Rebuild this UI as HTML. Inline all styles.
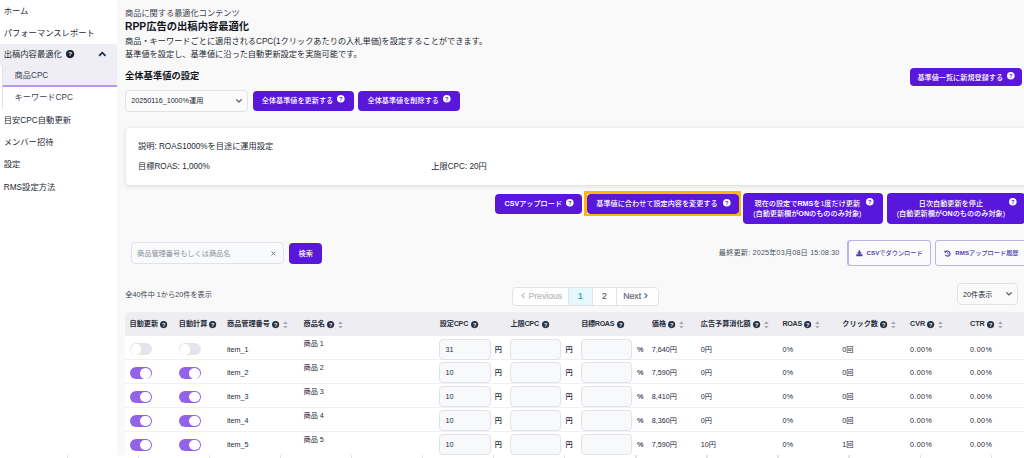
<!DOCTYPE html>
<html lang="ja">
<head>
<meta charset="utf-8">
<title>RPP広告の出稿内容最適化</title>
<style>
*{box-sizing:border-box;margin:0;padding:0}
html,body{width:1024px;height:458px;overflow:hidden;background:#fff}
body{position:relative;font-family:"Liberation Sans","Noto Sans CJK JP",sans-serif;font-size:8.2px;color:#252933;-webkit-text-size-adjust:none}
.abs{position:absolute;white-space:nowrap}
svg{overflow:visible}
.t{position:absolute;white-space:nowrap;line-height:12px;height:12px}
.s{font-size:7.2px;color:#252934}
.b{font-weight:bold}
#side{position:absolute;left:0;top:0;width:117px;height:455px;background:#fff;font-size:8.3px}
#main{position:absolute;left:117px;top:0;width:907px;height:455px;background:#f9f9fa}
.btn{position:absolute;background:#5a17dc;border-radius:4px}
.bt{position:absolute;white-space:nowrap;line-height:12px;height:12px;color:#fff;font-size:7.15px;font-weight:500}.bt b{font-weight:bold}
.inp{position:absolute;background:#f8f9fb;border:1px solid #e1e3e8;border-radius:4px}
.row{position:absolute;left:125px;width:905px;height:23.92px;background:#fff}.ln{position:absolute;left:125px;width:905px;height:2px;background:#f1f1f5}
.tg{position:absolute;width:22px;height:12.2px;border-radius:6.1px}
.tg i{position:absolute;top:.8px;width:10.6px;height:10.6px;border-radius:50%;background:#fff}
.tg.off{background:#e4e5ea}.tg.off i{left:.8px}
.tg.on{background:#9063e9}.tg.on i{right:.8px}
.pg{position:absolute;top:286.6px;height:19.8px;background:#fff;border:1px solid #e3e4e9;border-radius:4px;overflow:hidden}.pg b{position:absolute;top:0;bottom:0;width:1px;background:#e3e4e9}.pt{position:absolute;white-space:nowrap;line-height:12px;height:12px;font-size:8.7px;color:#636874;-webkit-text-stroke:.2px currentColor}
.ob{position:absolute;background:#beb3e8;border-radius:3.4px}.ob i{position:absolute;left:1.5px;top:1.5px;right:1.5px;bottom:1.5px;background:#fbfbfc;border-radius:2.2px}
</style>
</head>
<body>
<div id="side">
  <div class="abs" style="left:0;top:44px;width:117px;height:20.5px;background:#eeeef4"></div>
  <div class="abs" style="left:1.9px;top:64.5px;width:0.7px;height:44.5px;background:#e2e2e8"></div>
  <div class="abs" style="left:2.5px;top:64.5px;width:114.5px;height:20.5px;background:#eeeef4"></div>
  <div class="abs" style="left:2.5px;top:85px;width:114.5px;height:1.7px;background:#b996f5"></div>
  <div class="t" style="left:3.7px;top:4.5px">ホーム</div>
  <div class="t" style="left:3.7px;top:26.5px">パフォーマンスレポート</div>
  <div class="t" style="left:3.7px;top:48px">出稿内容最適化</div>
  <div class="t" style="left:14.6px;top:69.7px;color:#3a4050;font-size:8.2px">商品CPC</div>
  <div class="t" style="left:14.6px;top:92.0px;color:#3a4050;font-size:8.2px">キーワードCPC</div>
  <div class="t" style="left:3.7px;top:113.5px">目安CPC自動更新</div>
  <div class="t" style="left:3.7px;top:135.7px">メンバー招待</div>
  <div class="t" style="left:3.7px;top:157.7px">設定</div>
  <div class="t" style="left:3.7px;top:180.5px">RMS設定方法</div>
<svg class="abs" style="left:65.50px;top:50.00px" width="8.2" height="8.2" viewBox="0 0 10 10"><circle cx="5" cy="5" r="5" fill="#1c2233"/><text x="5" y="7.75" text-anchor="middle" font-family="Liberation Sans, sans-serif" font-weight="bold" font-size="7.6" fill="#fff">?</text></svg>
<svg class="abs" style="left:99.10px;top:52.39px" width="6.6" height="4.03" viewBox="0 0 6.6 4.03"><path d="M0.6 3.43 L3.30 0.7 L6.00 3.43" fill="none" stroke="#25304d" stroke-width="1.8" stroke-linecap="round" stroke-linejoin="round"/></svg>
</div>
<div id="main"></div>
<div class="t" style="left:125.00px;top:8.30px;color:#3d4250">商品に関する最適化コンテンツ</div>
<div class="t" style="left:125.00px;top:21.00px;font-size:10.3px;font-weight:bold;color:#12151d">RPP広告の出稿内容最適化</div>
<div class="t" style="left:125.00px;top:35.90px;">商品・キーワードごとに適用されるCPC(1クリックあたりの入札単価)を設定することができます。</div>
<div class="t" style="left:125.00px;top:48.50px;">基準値を設定し、基準値に沿った自動更新設定を実施可能です。</div>
<div class="t" style="left:125.00px;top:70.00px;font-size:9.3px;font-weight:bold;color:#12151d">全体基準値の設定</div>
<div class="inp" style="left:125.2px;top:90.1px;width:122.8px;height:21.6px;background:#fbfbfc"></div>
<div class="t s" style="left:131.20px;top:95.30px;">20250116_1000%運用</div>
<svg class="abs" style="left:236.00px;top:99.25px" width="6.0" height="3.70" viewBox="0 0 6.0 3.70"><path d="M0.6 0.6 L3.00 3.00 L5.40 0.6" fill="none" stroke="#5a5e6a" stroke-width="1.25" stroke-linecap="round" stroke-linejoin="round"/></svg>
<div class="btn" style="left:252.5px;top:90.75px;width:101.25px;height:20px;"></div>
<div class="bt" style="left:261.75px;top:94.60px">全体基準値を更新する</div>
<svg class="abs" style="left:337.45px;top:95.10px" width="7.6" height="7.6" viewBox="0 0 10 10"><circle cx="5" cy="5" r="5" fill="#fff"/><text x="5" y="7.75" text-anchor="middle" font-family="Liberation Sans, sans-serif" font-weight="bold" font-size="7.6" fill="#5a17dc">?</text></svg>
<div class="btn" style="left:358.25px;top:90.75px;width:101.25px;height:20px;"></div>
<div class="bt" style="left:367.50px;top:94.60px">全体基準値を削除する</div>
<svg class="abs" style="left:443.20px;top:95.10px" width="7.6" height="7.6" viewBox="0 0 10 10"><circle cx="5" cy="5" r="5" fill="#fff"/><text x="5" y="7.75" text-anchor="middle" font-family="Liberation Sans, sans-serif" font-weight="bold" font-size="7.6" fill="#5a17dc">?</text></svg>
<div class="btn" style="left:910px;top:68px;width:112px;height:18px;"></div>
<div class="bt" style="left:917.40px;top:71.50px">基準値一覧に新規登録する</div>
<svg class="abs" style="left:1006.80px;top:71.80px" width="7.6" height="7.6" viewBox="0 0 10 10"><circle cx="5" cy="5" r="5" fill="#fff"/><text x="5" y="7.75" text-anchor="middle" font-family="Liberation Sans, sans-serif" font-weight="bold" font-size="7.6" fill="#5a17dc">?</text></svg>
<div class="abs" style="left:125.5px;top:128.3px;width:910px;height:56.5px;background:#fff;border-radius:4px;box-shadow:0 1px 4px rgba(20,20,30,.15)"></div>
<div class="t" style="left:138.00px;top:140.60px;">説明: ROAS1000%を目途に運用設定</div>
<div class="t" style="left:138.00px;top:161.40px;">目標ROAS: 1,000%</div>
<div class="t" style="left:431.25px;top:161.40px;">上限CPC: 20円</div>
<div class="btn" style="left:495px;top:193.5px;width:87.2px;height:20.2px;"></div>
<div class="bt" style="left:504.50px;top:197.70px"><b>CSV</b>アップロード</div>
<svg class="abs" style="left:566.45px;top:198.60px" width="7.6" height="7.6" viewBox="0 0 10 10"><circle cx="5" cy="5" r="5" fill="#fff"/><text x="5" y="7.75" text-anchor="middle" font-family="Liberation Sans, sans-serif" font-weight="bold" font-size="7.6" fill="#5a17dc">?</text></svg>
<div class="abs" style="left:584.1px;top:190.9px;width:156.7px;height:25.6px;background:#fdb900"></div><div class="abs" style="left:586.9px;top:193.6px;width:151.1px;height:20.3px;background:#fdfdfd"></div>
<div class="btn" style="left:587px;top:193.6px;width:151.6px;height:20.3px;"></div>
<div class="bt" style="left:596.25px;top:197.70px">基準値に合わせて設定内容を変更する</div>
<svg class="abs" style="left:722.70px;top:198.60px" width="7.6" height="7.6" viewBox="0 0 10 10"><circle cx="5" cy="5" r="5" fill="#fff"/><text x="5" y="7.75" text-anchor="middle" font-family="Liberation Sans, sans-serif" font-weight="bold" font-size="7.6" fill="#5a17dc">?</text></svg>
<div class="btn" style="left:742.8px;top:193.3px;width:139.8px;height:30.5px;"></div>
<div class="bt" style="left:752.3px;top:197.9px;width:110px;text-align:center">現在の設定で<b>RMS</b>を1度だけ更新</div>
<div class="bt" style="left:752.3px;top:207.9px;width:110px;text-align:center">(自動更新欄が<b>ON</b>のもののみ対象)</div>
<svg class="abs" style="left:865.90px;top:198.40px" width="7.6" height="7.6" viewBox="0 0 10 10"><circle cx="5" cy="5" r="5" fill="#fff"/><text x="5" y="7.75" text-anchor="middle" font-family="Liberation Sans, sans-serif" font-weight="bold" font-size="7.6" fill="#5a17dc">?</text></svg>
<div class="btn" style="left:886.5px;top:193.3px;width:138.6px;height:30.5px;"></div>
<div class="bt" style="left:895.9px;top:197.9px;width:110px;text-align:center">日次自動更新を停止</div>
<div class="bt" style="left:895.9px;top:207.9px;width:110px;text-align:center">(自動更新欄が<b>ON</b>のもののみ対象)</div>
<svg class="abs" style="left:1009.10px;top:198.40px" width="7.6" height="7.6" viewBox="0 0 10 10"><circle cx="5" cy="5" r="5" fill="#fff"/><text x="5" y="7.75" text-anchor="middle" font-family="Liberation Sans, sans-serif" font-weight="bold" font-size="7.6" fill="#5a17dc">?</text></svg>
<div class="inp" style="left:131px;top:242px;width:152.6px;height:22.3px;background:#f9fafb"></div>
<div class="t s" style="left:137.00px;top:247.70px;color:#8d919b">商品管理番号もしくは商品名</div>
<svg class="abs" style="left:270.9px;top:250.9px" width="4.8" height="4.8" viewBox="0 0 4.8 4.8"><path d="M0.5 0.5L4.3 4.3M4.3 0.5L0.5 4.3" stroke="#6b6f7a" stroke-width="0.9" fill="none"/></svg>
<div class="btn" style="left:289.2px;top:243.1px;width:33.1px;height:20.5px;"></div>
<div class="bt" style="left:298.60px;top:247.70px">検索</div>
<div class="t" style="left:718.80px;top:247.20px;color:#4a4f5c;font-size:7.2px;letter-spacing:.17px">最終更新: 2025年03月08日 15:08:30</div>
<div class="ob" style="left:847.2px;top:239.9px;width:84.3px;height:26.5px"><i></i></div>
<svg class="abs" style="left:855.9px;top:249.8px" width="6.8" height="6.6" viewBox="0 0 10 10"><path d="M3.8 0.2h2.4v3.2h2.6L5 7.4 1.2 3.4h2.6zM0.2 6.5h9.6v3.1H0.2z" fill="#4f3eab"/></svg>
<div class="t" style="left:866.60px;top:247.20px;color:#4f3eab;font-size:6.2px;font-weight:500"><b>CSV</b>でダウンロード</div>
<div class="ob" style="left:934.9px;top:239.9px;width:100px;height:26.5px"><i></i></div>
<svg class="abs" style="left:943.6px;top:249.7px" width="7" height="7" viewBox="0 0 10 10"><path d="M2.1 3.2A3.6 3.6 0 1 1 2.3 7.4" fill="none" stroke="#4f3eab" stroke-width="1.5" stroke-linecap="round"/><path d="M0.3 0.9l3.4 0.3-2.6 2.9z" fill="#4f3eab"/><path d="M5.4 3.3v2.1l1.5 0.9" fill="none" stroke="#4f3eab" stroke-width="1.1" stroke-linecap="round"/></svg>
<div class="t" style="left:955.30px;top:247.20px;color:#4f3eab;font-size:6.2px;font-weight:500"><b>RMS</b>アップロード履歴</div>
<div class="t s" style="left:125.30px;top:288.50px;color:#3d4250">全40件中 1から20件を表示</div>
<div class="pg" style="left:511.6px;width:147.2px"><b style="left:56px;width:24px;background:#e6f8fc"></b><b style="left:55.9px"></b><b style="left:79.9px"></b><b style="left:103.8px"></b></div>
<svg class="abs" style="left:521.4px;top:293.2px" width="4" height="5.4" viewBox="0 0 4 5.4"><path d="M3.2 0.6L0.9 2.7L3.2 4.8" fill="none" stroke="#b4b7c0" stroke-width="1.1" stroke-linecap="round" stroke-linejoin="round"/></svg>
<div class="pt" style="left:528.4px;top:289.7px;color:#b7bac3">Previous</div>
<div class="pt" style="left:568.5px;width:24px;text-align:center;top:289.7px;color:#2d9ab8">1</div>
<div class="pt" style="left:592.5px;width:24px;text-align:center;top:289.7px">2</div>
<div class="pt" style="left:623.2px;top:289.7px">Next</div>
<svg class="abs" style="left:644.3px;top:293.2px" width="4" height="5.4" viewBox="0 0 4 5.4"><path d="M0.8 0.6L3.1 2.7L0.8 4.8" fill="none" stroke="#5d626e" stroke-width="1.1" stroke-linecap="round" stroke-linejoin="round"/></svg>
<div class="inp" style="left:957px;top:283px;width:60.6px;height:22.1px;background:#fbfbfc"></div>
<div class="t s" style="left:963.00px;top:288.50px;">20件表示</div>
<svg class="abs" style="left:1005.50px;top:292.45px" width="6.0" height="3.70" viewBox="0 0 6.0 3.70"><path d="M0.6 0.6 L3.00 3.00 L5.40 0.6" fill="none" stroke="#5a5e6a" stroke-width="1.2" stroke-linecap="round" stroke-linejoin="round"/></svg>
<div class="abs" style="left:125px;top:311.9px;width:905px;height:24.35px;background:#eeeef2;border-radius:4px 0 0 0"></div>
<div class="t" style="left:129.50px;top:318.20px;font-size:7.15px;font-weight:bold;color:#2a2f3c;letter-spacing:0px">自動更新</div><svg class="abs" style="left:160.20px;top:321.10px" width="7.2" height="7.2" viewBox="0 0 10 10"><circle cx="5" cy="5" r="5" fill="#273045"/><text x="5" y="7.75" text-anchor="middle" font-family="Liberation Sans, sans-serif" font-weight="bold" font-size="7.6" fill="#fff">?</text></svg>
<div class="t" style="left:178.75px;top:318.20px;font-size:7.15px;font-weight:bold;color:#2a2f3c;letter-spacing:0px">自動計算</div><svg class="abs" style="left:209.45px;top:321.10px" width="7.2" height="7.2" viewBox="0 0 10 10"><circle cx="5" cy="5" r="5" fill="#273045"/><text x="5" y="7.75" text-anchor="middle" font-family="Liberation Sans, sans-serif" font-weight="bold" font-size="7.6" fill="#fff">?</text></svg>
<div class="t" style="left:227.00px;top:318.20px;font-size:7.15px;font-weight:bold;color:#2a2f3c;letter-spacing:0px">商品管理番号</div><svg class="abs" style="left:272.10px;top:321.10px" width="7.2" height="7.2" viewBox="0 0 10 10"><circle cx="5" cy="5" r="5" fill="#273045"/><text x="5" y="7.75" text-anchor="middle" font-family="Liberation Sans, sans-serif" font-weight="bold" font-size="7.6" fill="#fff">?</text></svg><svg class="abs" style="left:282.70px;top:320.50px" width="4.8" height="7.8" viewBox="0 0 4.8 7.8"><path d="M2.4 0.2 L4.7 2.9 H0.1 Z M2.4 7.6 L4.7 4.9 H0.1 Z" fill="#a4a8b4"/></svg>
<div class="t" style="left:303.50px;top:318.20px;font-size:7.15px;font-weight:bold;color:#2a2f3c;letter-spacing:0px">商品名</div><svg class="abs" style="left:327.20px;top:321.10px" width="7.2" height="7.2" viewBox="0 0 10 10"><circle cx="5" cy="5" r="5" fill="#273045"/><text x="5" y="7.75" text-anchor="middle" font-family="Liberation Sans, sans-serif" font-weight="bold" font-size="7.6" fill="#fff">?</text></svg><svg class="abs" style="left:337.80px;top:320.50px" width="4.8" height="7.8" viewBox="0 0 4.8 7.8"><path d="M2.4 0.2 L4.7 2.9 H0.1 Z M2.4 7.6 L4.7 4.9 H0.1 Z" fill="#a4a8b4"/></svg>
<div class="t" style="left:439.75px;top:318.20px;font-size:7.15px;font-weight:bold;color:#2a2f3c;letter-spacing:-0.2px">設定CPC</div><svg class="abs" style="left:471.05px;top:321.10px" width="7.2" height="7.2" viewBox="0 0 10 10"><circle cx="5" cy="5" r="5" fill="#273045"/><text x="5" y="7.75" text-anchor="middle" font-family="Liberation Sans, sans-serif" font-weight="bold" font-size="7.6" fill="#fff">?</text></svg>
<div class="t" style="left:510.50px;top:318.20px;font-size:7.15px;font-weight:bold;color:#2a2f3c;letter-spacing:-0.2px">上限CPC</div><svg class="abs" style="left:541.80px;top:321.10px" width="7.2" height="7.2" viewBox="0 0 10 10"><circle cx="5" cy="5" r="5" fill="#273045"/><text x="5" y="7.75" text-anchor="middle" font-family="Liberation Sans, sans-serif" font-weight="bold" font-size="7.6" fill="#fff">?</text></svg>
<div class="t" style="left:581.25px;top:318.20px;font-size:7.15px;font-weight:bold;color:#2a2f3c;letter-spacing:-0.35px">目標ROAS</div><svg class="abs" style="left:617.35px;top:321.10px" width="7.2" height="7.2" viewBox="0 0 10 10"><circle cx="5" cy="5" r="5" fill="#273045"/><text x="5" y="7.75" text-anchor="middle" font-family="Liberation Sans, sans-serif" font-weight="bold" font-size="7.6" fill="#fff">?</text></svg>
<div class="t" style="left:651.75px;top:318.20px;font-size:7.15px;font-weight:bold;color:#2a2f3c;letter-spacing:0px">価格</div><svg class="abs" style="left:668.25px;top:321.10px" width="7.2" height="7.2" viewBox="0 0 10 10"><circle cx="5" cy="5" r="5" fill="#273045"/><text x="5" y="7.75" text-anchor="middle" font-family="Liberation Sans, sans-serif" font-weight="bold" font-size="7.6" fill="#fff">?</text></svg><svg class="abs" style="left:678.85px;top:320.50px" width="4.8" height="7.8" viewBox="0 0 4.8 7.8"><path d="M2.4 0.2 L4.7 2.9 H0.1 Z M2.4 7.6 L4.7 4.9 H0.1 Z" fill="#a4a8b4"/></svg>
<div class="t" style="left:700.75px;top:318.20px;font-size:7.15px;font-weight:bold;color:#2a2f3c;letter-spacing:0px">広告予算消化額</div><svg class="abs" style="left:752.95px;top:321.10px" width="7.2" height="7.2" viewBox="0 0 10 10"><circle cx="5" cy="5" r="5" fill="#273045"/><text x="5" y="7.75" text-anchor="middle" font-family="Liberation Sans, sans-serif" font-weight="bold" font-size="7.6" fill="#fff">?</text></svg><svg class="abs" style="left:763.55px;top:320.50px" width="4.8" height="7.8" viewBox="0 0 4.8 7.8"><path d="M2.4 0.2 L4.7 2.9 H0.1 Z M2.4 7.6 L4.7 4.9 H0.1 Z" fill="#a4a8b4"/></svg>
<div class="t" style="left:782.50px;top:318.20px;font-size:7.15px;font-weight:bold;color:#2a2f3c;letter-spacing:-0.3px">ROAS</div><svg class="abs" style="left:804.40px;top:321.10px" width="7.2" height="7.2" viewBox="0 0 10 10"><circle cx="5" cy="5" r="5" fill="#273045"/><text x="5" y="7.75" text-anchor="middle" font-family="Liberation Sans, sans-serif" font-weight="bold" font-size="7.6" fill="#fff">?</text></svg><svg class="abs" style="left:815.00px;top:320.50px" width="4.8" height="7.8" viewBox="0 0 4.8 7.8"><path d="M2.4 0.2 L4.7 2.9 H0.1 Z M2.4 7.6 L4.7 4.9 H0.1 Z" fill="#a4a8b4"/></svg>
<div class="t" style="left:842.25px;top:318.20px;font-size:7.15px;font-weight:bold;color:#2a2f3c;letter-spacing:0px">クリック数</div><svg class="abs" style="left:880.15px;top:321.10px" width="7.2" height="7.2" viewBox="0 0 10 10"><circle cx="5" cy="5" r="5" fill="#273045"/><text x="5" y="7.75" text-anchor="middle" font-family="Liberation Sans, sans-serif" font-weight="bold" font-size="7.6" fill="#fff">?</text></svg><svg class="abs" style="left:890.75px;top:320.50px" width="4.8" height="7.8" viewBox="0 0 4.8 7.8"><path d="M2.4 0.2 L4.7 2.9 H0.1 Z M2.4 7.6 L4.7 4.9 H0.1 Z" fill="#a4a8b4"/></svg>
<div class="t" style="left:910.00px;top:318.20px;font-size:7.15px;font-weight:bold;color:#2a2f3c;letter-spacing:0px">CVR</div><svg class="abs" style="left:927.00px;top:321.10px" width="7.2" height="7.2" viewBox="0 0 10 10"><circle cx="5" cy="5" r="5" fill="#273045"/><text x="5" y="7.75" text-anchor="middle" font-family="Liberation Sans, sans-serif" font-weight="bold" font-size="7.6" fill="#fff">?</text></svg><svg class="abs" style="left:937.60px;top:320.50px" width="4.8" height="7.8" viewBox="0 0 4.8 7.8"><path d="M2.4 0.2 L4.7 2.9 H0.1 Z M2.4 7.6 L4.7 4.9 H0.1 Z" fill="#a4a8b4"/></svg>
<div class="t" style="left:970.00px;top:318.20px;font-size:7.15px;font-weight:bold;color:#2a2f3c;letter-spacing:0px">CTR</div><svg class="abs" style="left:987.00px;top:321.10px" width="7.2" height="7.2" viewBox="0 0 10 10"><circle cx="5" cy="5" r="5" fill="#273045"/><text x="5" y="7.75" text-anchor="middle" font-family="Liberation Sans, sans-serif" font-weight="bold" font-size="7.6" fill="#fff">?</text></svg><svg class="abs" style="left:997.60px;top:320.50px" width="4.8" height="7.8" viewBox="0 0 4.8 7.8"><path d="M2.4 0.2 L4.7 2.9 H0.1 Z M2.4 7.6 L4.7 4.9 H0.1 Z" fill="#a4a8b4"/></svg>
<div class="row" style="top:336.20px"></div><div class="ln" style="top:359.10px"></div>
<div class="tg off" style="left:129.8px;top:343.20px"><i></i></div>
<div class="tg off" style="left:178.75px;top:343.20px"><i></i></div>
<div class="t s" style="left:227.00px;top:343.50px;">item_1</div>
<div class="t s" style="left:303.50px;top:338.30px;">商品 1</div>
<div class="inp" style="left:439.3px;top:338.50px;width:51.4px;height:21px"></div>
<div class="inp" style="left:510.4px;top:338.50px;width:51.0px;height:21px"></div>
<div class="inp" style="left:581.1px;top:338.50px;width:51.4px;height:21px"></div>
<div class="t s" style="left:445.50px;top:343.50px;">31</div>
<div class="t s" style="left:494.75px;top:343.50px;font-weight:500">円</div>
<div class="t s" style="left:565.50px;top:343.50px;font-weight:500">円</div>
<div class="t s" style="left:637.00px;top:343.50px;-webkit-text-stroke:.1px currentColor">%</div>
<div class="t s" style="left:651.75px;top:343.50px;">7,640円</div>
<div class="t s" style="left:700.75px;top:343.50px;">0円</div>
<div class="t s" style="left:782.50px;top:343.50px;letter-spacing:.35px">0%</div>
<div class="t s" style="left:842.25px;top:343.50px;">0回</div>
<div class="t s" style="left:910.00px;top:343.50px;letter-spacing:.35px">0.00%</div>
<div class="t s" style="left:970.00px;top:343.50px;letter-spacing:.35px">0.00%</div>
<div class="row" style="top:360.12px"></div><div class="ln" style="top:383.02px"></div>
<div class="tg on" style="left:129.8px;top:367.12px"><i></i></div>
<div class="tg on" style="left:178.75px;top:367.12px"><i></i></div>
<div class="t s" style="left:227.00px;top:367.42px;">item_2</div>
<div class="t s" style="left:303.50px;top:362.22px;">商品 2</div>
<div class="inp" style="left:439.3px;top:362.42px;width:51.4px;height:21px"></div>
<div class="inp" style="left:510.4px;top:362.42px;width:51.0px;height:21px"></div>
<div class="inp" style="left:581.1px;top:362.42px;width:51.4px;height:21px"></div>
<div class="t s" style="left:445.50px;top:367.42px;">10</div>
<div class="t s" style="left:494.75px;top:367.42px;font-weight:500">円</div>
<div class="t s" style="left:565.50px;top:367.42px;font-weight:500">円</div>
<div class="t s" style="left:637.00px;top:367.42px;-webkit-text-stroke:.1px currentColor">%</div>
<div class="t s" style="left:651.75px;top:367.42px;">7,590円</div>
<div class="t s" style="left:700.75px;top:367.42px;">0円</div>
<div class="t s" style="left:782.50px;top:367.42px;letter-spacing:.35px">0%</div>
<div class="t s" style="left:842.25px;top:367.42px;">0回</div>
<div class="t s" style="left:910.00px;top:367.42px;letter-spacing:.35px">0.00%</div>
<div class="t s" style="left:970.00px;top:367.42px;letter-spacing:.35px">0.00%</div>
<div class="row" style="top:384.04px"></div><div class="ln" style="top:406.94px"></div>
<div class="tg on" style="left:129.8px;top:391.04px"><i></i></div>
<div class="tg on" style="left:178.75px;top:391.04px"><i></i></div>
<div class="t s" style="left:227.00px;top:391.34px;">item_3</div>
<div class="t s" style="left:303.50px;top:386.14px;">商品 3</div>
<div class="inp" style="left:439.3px;top:386.34px;width:51.4px;height:21px"></div>
<div class="inp" style="left:510.4px;top:386.34px;width:51.0px;height:21px"></div>
<div class="inp" style="left:581.1px;top:386.34px;width:51.4px;height:21px"></div>
<div class="t s" style="left:445.50px;top:391.34px;">10</div>
<div class="t s" style="left:494.75px;top:391.34px;font-weight:500">円</div>
<div class="t s" style="left:565.50px;top:391.34px;font-weight:500">円</div>
<div class="t s" style="left:637.00px;top:391.34px;-webkit-text-stroke:.1px currentColor">%</div>
<div class="t s" style="left:651.75px;top:391.34px;">8,410円</div>
<div class="t s" style="left:700.75px;top:391.34px;">0円</div>
<div class="t s" style="left:782.50px;top:391.34px;letter-spacing:.35px">0%</div>
<div class="t s" style="left:842.25px;top:391.34px;">0回</div>
<div class="t s" style="left:910.00px;top:391.34px;letter-spacing:.35px">0.00%</div>
<div class="t s" style="left:970.00px;top:391.34px;letter-spacing:.35px">0.00%</div>
<div class="row" style="top:407.96px"></div><div class="ln" style="top:430.86px"></div>
<div class="tg on" style="left:129.8px;top:414.96px"><i></i></div>
<div class="tg on" style="left:178.75px;top:414.96px"><i></i></div>
<div class="t s" style="left:227.00px;top:415.26px;">item_4</div>
<div class="t s" style="left:303.50px;top:410.06px;">商品 4</div>
<div class="inp" style="left:439.3px;top:410.26px;width:51.4px;height:21px"></div>
<div class="inp" style="left:510.4px;top:410.26px;width:51.0px;height:21px"></div>
<div class="inp" style="left:581.1px;top:410.26px;width:51.4px;height:21px"></div>
<div class="t s" style="left:445.50px;top:415.26px;">10</div>
<div class="t s" style="left:494.75px;top:415.26px;font-weight:500">円</div>
<div class="t s" style="left:565.50px;top:415.26px;font-weight:500">円</div>
<div class="t s" style="left:637.00px;top:415.26px;-webkit-text-stroke:.1px currentColor">%</div>
<div class="t s" style="left:651.75px;top:415.26px;">8,360円</div>
<div class="t s" style="left:700.75px;top:415.26px;">0円</div>
<div class="t s" style="left:782.50px;top:415.26px;letter-spacing:.35px">0%</div>
<div class="t s" style="left:842.25px;top:415.26px;">0回</div>
<div class="t s" style="left:910.00px;top:415.26px;letter-spacing:.35px">0.00%</div>
<div class="t s" style="left:970.00px;top:415.26px;letter-spacing:.35px">0.00%</div>
<div class="row" style="top:431.88px"></div><div class="ln" style="top:454.78px"></div>
<div class="tg on" style="left:129.8px;top:438.88px"><i></i></div>
<div class="tg on" style="left:178.75px;top:438.88px"><i></i></div>
<div class="t s" style="left:227.00px;top:439.18px;">item_5</div>
<div class="t s" style="left:303.50px;top:433.98px;">商品 5</div>
<div class="inp" style="left:439.3px;top:434.18px;width:51.4px;height:21px"></div>
<div class="inp" style="left:510.4px;top:434.18px;width:51.0px;height:21px"></div>
<div class="inp" style="left:581.1px;top:434.18px;width:51.4px;height:21px"></div>
<div class="t s" style="left:445.50px;top:439.18px;">10</div>
<div class="t s" style="left:494.75px;top:439.18px;font-weight:500">円</div>
<div class="t s" style="left:565.50px;top:439.18px;font-weight:500">円</div>
<div class="t s" style="left:637.00px;top:439.18px;-webkit-text-stroke:.1px currentColor">%</div>
<div class="t s" style="left:651.75px;top:439.18px;">7,590円</div>
<div class="t s" style="left:700.75px;top:439.18px;">10円</div>
<div class="t s" style="left:782.50px;top:439.18px;letter-spacing:.35px">0%</div>
<div class="t s" style="left:842.25px;top:439.18px;">1回</div>
<div class="t s" style="left:910.00px;top:439.18px;letter-spacing:.35px">0.00%</div>
<div class="t s" style="left:970.00px;top:439.18px;letter-spacing:.35px">0.00%</div>
<div class="abs" style="left:0;top:455px;width:1024px;height:3px;background:#fff"></div>
<div class="abs" style="left:66.60px;top:455.2px;width:1.3px;height:3px;background:#e3e3e6"></div>
<div class="abs" style="left:137.68px;top:455.2px;width:1.3px;height:3px;background:#e3e3e6"></div>
<div class="abs" style="left:208.76px;top:455.2px;width:1.3px;height:3px;background:#e3e3e6"></div>
<div class="abs" style="left:279.84px;top:455.2px;width:1.3px;height:3px;background:#e3e3e6"></div>
<div class="abs" style="left:350.92px;top:455.2px;width:1.3px;height:3px;background:#e3e3e6"></div>
<div class="abs" style="left:422.00px;top:455.2px;width:1.3px;height:3px;background:#e3e3e6"></div>
<div class="abs" style="left:493.08px;top:455.2px;width:1.3px;height:3px;background:#e3e3e6"></div>
<div class="abs" style="left:564.16px;top:455.2px;width:1.3px;height:3px;background:#e3e3e6"></div>
<div class="abs" style="left:635.24px;top:455.2px;width:1.3px;height:3px;background:#e3e3e6"></div>
<div class="abs" style="left:706.32px;top:455.2px;width:1.3px;height:3px;background:#e3e3e6"></div>
<div class="abs" style="left:777.40px;top:455.2px;width:1.3px;height:3px;background:#e3e3e6"></div>
<div class="abs" style="left:848.48px;top:455.2px;width:1.3px;height:3px;background:#e3e3e6"></div>
<div class="abs" style="left:919.56px;top:455.2px;width:1.3px;height:3px;background:#e3e3e6"></div>
<div class="abs" style="left:990.64px;top:455.2px;width:1.3px;height:3px;background:#e3e3e6"></div>
</body>
</html>
